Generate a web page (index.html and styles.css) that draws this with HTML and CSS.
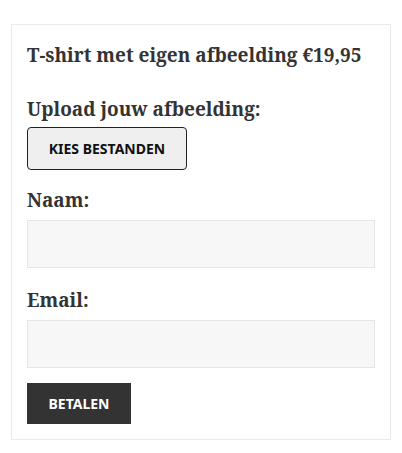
FILE: index.html
```html
<!DOCTYPE html>
<html lang="nl">
<head>
<meta charset="utf-8">
<title>T-shirt</title>
<link rel="stylesheet" href="styles.css">
</head>
<body>
<div class="card">
  <h2 class="title">T-shirt met eigen afbeelding €19,95</h2>
  <form class="form">
    <div class="field upload">
      <label class="label">Upload jouw afbeelding:</label>
      <span class="file-btn">Kies bestanden</span>
    </div>
    <div class="field">
      <label class="label">Naam:</label>
      <input class="input" type="text">
    </div>
    <div class="field">
      <label class="label">Email:</label>
      <input class="input" type="text">
    </div>
    <div class="actions">
      <span class="pay-btn">Betalen</span>
    </div>
  </form>
</div>
</body>
</html>
```
FILE: styles.css
```css
html, body {
  margin: 0;
  padding: 0;
  background: #fff;
}
body {
  padding: 24px 12px 14px 11px;
  font-family: "Noto Serif", "DejaVu Serif", serif;
  color: #333;
}
.card {
  border: 1px solid #eaeaea;
  padding: 15px 15px 15px 15px;
  width: 348px;
}
.title {
  margin: 0;
  font-size: 19px;
  line-height: 30px;
  font-weight: 700;
  padding-top: 0;
  white-space: nowrap;
}
.form {
  margin-top: 25px;
}
.field {
  display: flex;
  flex-direction: column;
  align-items: flex-start;
}
.label {
  font-size: 19px;
  font-weight: 700;
  line-height: 28px;
}
.file-btn {
  box-sizing: border-box;
  display: inline-block;
  margin-top: 4px;
  width: 160px;
  height: 43px;
  border: 1px solid #222;
  border-radius: 4px;
  background: #efefef;
  color: #111;
  font-family: "Noto Sans", "Open Sans", sans-serif;
  font-weight: 700;
  font-size: 14px;
  line-height: 41px;
  text-align: center;
  text-transform: uppercase;
}
.field + .field {
  margin-top: 18px;
}
.upload + .field {
  margin-top: 16px;
}
.input {
  box-sizing: border-box;
  width: 348px;
  height: 48px;
  margin: 6px 0 0;
  border: 1px solid #e5e5e5;
  background: #f7f7f7;
  padding: 0 10px;
}
.actions {
  margin-top: 15px;
}
.pay-btn {
  display: inline-block;
  width: 104px;
  height: 41px;
  background: #333;
  color: #fff;
  font-family: "Noto Sans", "Open Sans", sans-serif;
  font-weight: 700;
  font-size: 14px;
  line-height: 41px;
  text-align: center;
  text-transform: uppercase;
  vertical-align: top;
}
```
